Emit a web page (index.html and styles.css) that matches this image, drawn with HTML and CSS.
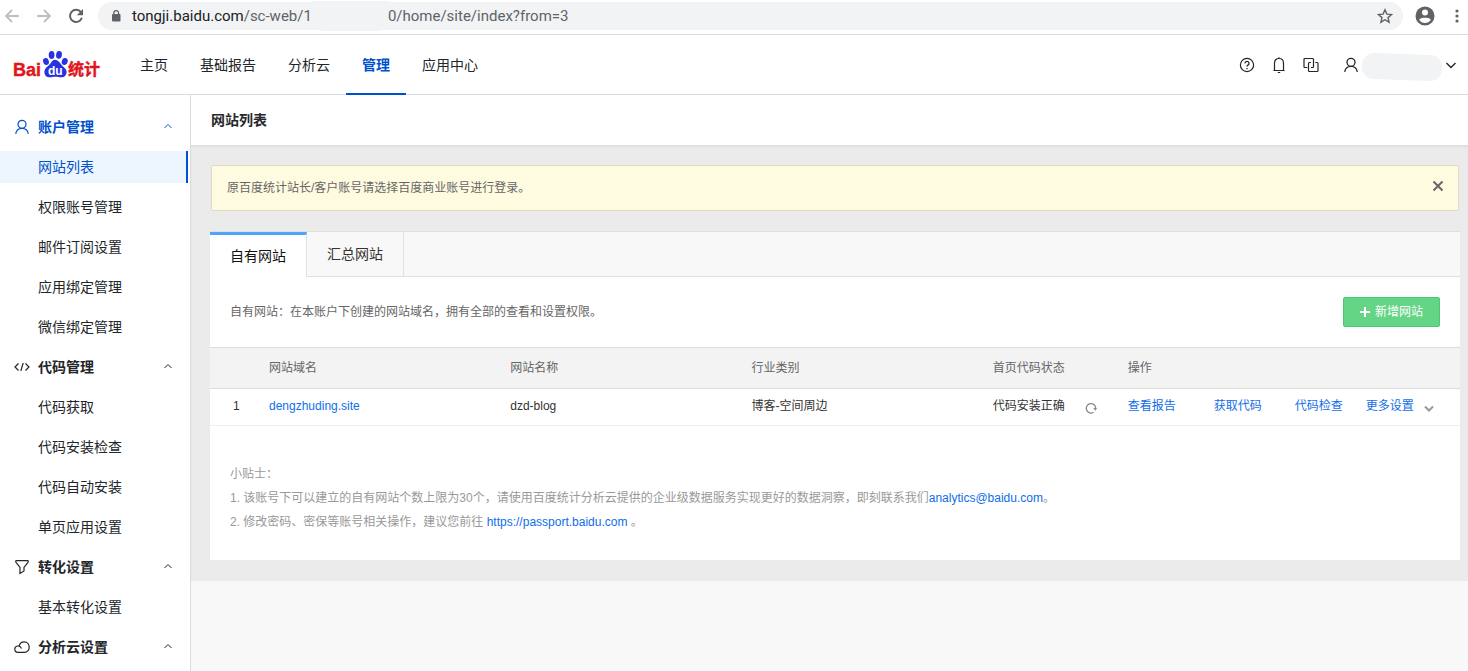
FILE: index.html
```html
<!DOCTYPE html>
<html lang="zh-CN">
<head>
<meta charset="utf-8">
<title>网站列表 - 百度统计</title>
<link rel="stylesheet" href="styles.css">
</head>
<body>
<div class="browser-bar">
  <div class="browser-nav">
    <button class="icon-button faded" aria-label="后退"><svg width="16" height="16" viewBox="0 0 16 16"><path d="M15 8H2.500M8 2L2 8L8 14" stroke-width="1.800"/></svg></button>
    <button class="icon-button faded" aria-label="前进"><svg width="16" height="16" viewBox="0 0 16 16"><path d="M1 8H13.500M8 2L14 8L8 14" stroke-width="1.800"/></svg></button>
    <button class="icon-button" aria-label="刷新"><svg width="16" height="16" viewBox="0 0 16 16"><path d="M13 4.200A6.100 6.100 0 1 0 13.900 9.800" stroke-width="2"/><path d="M15 1V7.200H8.800Z" fill="currentColor" stroke="none"/></svg></button>
  </div>
  <div class="address">
    <svg class="lock" width="10" height="12" viewBox="0 0 10 12"><rect x="1" y="4" width="8.500" height="7.500" rx="1" fill="currentColor" stroke="none"/><path d="M2.800 4.500V3a2.400 2.400 0 0 1 4.800 0V4.500" stroke-width="1.300"/></svg>
    <span class="url"><span class="url-host">tongji.baidu.com</span>/sc-web/1<span class="url-mask"></span>0/home/site/index?from=3</span>
    <button class="icon-button star" aria-label="收藏"><svg width="16" height="16" viewBox="0 0 16 16"><path d="M8 1.800L9.900 6.100L14.600 6.500L11 9.600L12.100 14.200L8 11.700L3.900 14.200L5 9.600L1.400 6.500L6.100 6.100Z" stroke-width="1.400"/></svg></button>
  </div>
  <button class="icon-button profile" aria-label="个人资料"><svg width="20" height="20" viewBox="0 0 20 20"><circle cx="10" cy="10" r="9.500" fill="currentColor" stroke="none"/><circle cx="10" cy="6.500" r="3" fill="#fff" stroke="none"/><path d="M4.200 13.700C5.600 11.200 14.400 11.200 15.800 13.700C14.400 15.900 12.300 17 10 17S5.600 15.900 4.200 13.700Z" fill="#fff" stroke="none"/></svg></button>
  <button class="icon-button more" aria-label="更多"><svg width="4" height="16" viewBox="0 0 4 16"><g fill="currentColor" stroke="none"><circle cx="2" cy="3" r="1.600"/><circle cx="2" cy="8" r="1.600"/><circle cx="2" cy="13" r="1.600"/></g></svg></button>
</div>

<header class="site-header">
  <a class="logo" href="#" aria-label="百度统计">
    <svg width="90" height="32" viewBox="0 0 90 32">
      <g class="logo-red"><text class="logo-bai" x="0" y="26">Bai</text><text class="logo-name" x="55" y="25">统计</text></g>
      <g class="logo-paw"><ellipse cx="33" cy="11.500" rx="2.900" ry="3.500" transform="rotate(-12 33 11.500)"/><ellipse cx="38.600" cy="5" rx="2.900" ry="3.900"/><ellipse cx="46" cy="4.800" rx="2.900" ry="3.900" transform="rotate(8 46 4.800)"/><ellipse cx="51.700" cy="11.500" rx="3" ry="3.500" transform="rotate(12 51.700 11.500)"/><path d="M42 9.800C39.300 9.800 38.500 12.300 36.800 14.300C34.800 16.500 31.400 18.500 31.400 22C31.400 25.300 33.500 27.300 36.600 27.300C38.800 27.300 40.200 26.800 42.400 26.800S46 27.300 48.400 27.300C51.500 27.300 53.600 25 53.600 22C53.600 18.500 50.200 17 48 14.200C46.200 12.200 44.800 9.800 42 9.800Z"/></g>
      <text class="logo-du" x="35" y="25">du</text>
    </svg>
  </a>
  <nav class="main-nav">
    <a href="#">主页</a><a href="#">基础报告</a><a href="#">分析云</a><a class="current" href="#">管理</a><a href="#">应用中心</a>
  </nav>
  <div class="header-tools">
    <button class="icon-button" aria-label="帮助"><svg width="16" height="16" viewBox="0 0 16 16"><circle cx="8" cy="8" r="6.600" stroke-width="1.200"/><path d="M6 6.400A2 2 0 1 1 8.900 8.100C8.200 8.500 8 8.800 8 9.600M8 10.900V12.200" stroke-width="1.300"/></svg></button>
    <button class="icon-button" aria-label="通知"><svg width="16" height="16" viewBox="0 0 16 16"><path d="M2.500 13.500H13.500M3.500 13.500V6.200C3.500 3.200 5.300 1.500 8 1.500S12.500 3.200 12.500 6.200V13.500M8 .3V1.500M6.800 15.500H9.200" stroke-width="1.200"/></svg></button>
    <button class="icon-button" aria-label="切换产品"><svg width="16" height="16" viewBox="0 0 16 16"><path d="M4.300 10.500H1.900Q1 10.500 1 9.600V2.400Q1 1.500 1.900 1.500H9.600Q10.500 1.500 10.500 2.400V9.600Q10.500 10.500 9.600 10.500H8M12.300 5.500H14.100Q15 5.500 15 6.400V13.600Q15 14.500 14.100 14.500H6.400Q5.500 14.500 5.500 13.600V6.400Q5.500 5.500 6.400 5.500H8" stroke-width="1.200"/></svg></button>
    <button class="icon-button account" aria-label="账户"><svg width="16" height="16" viewBox="0 0 16 16"><circle cx="8" cy="5.300" r="4" stroke-width="1.300"/><path d="M1.700 14.800C2.200 11.500 4.500 9.300 8 9.300S13.800 11.500 14.300 14.800" stroke-width="1.300"/></svg><span class="account-mask"></span><svg width="12" height="12" viewBox="0 0 12 12"><path d="M1.500 4L6 8.500L10.500 4" stroke-width="1.400"/></svg></button>
  </div>
</header>

<div class="layout">
  <aside class="sidebar">
    <section class="group active">
      <button class="group-title"><svg width="16" height="16" viewBox="0 0 16 16"><circle cx="8" cy="5.300" r="4" stroke-width="1.200"/><path d="M1.700 14.800C2.200 11.500 4.500 9.300 8 9.300S13.800 11.500 14.300 14.800" stroke-width="1.200"/></svg><span>账户管理</span><svg class="caret" width="10" height="10" viewBox="0 0 10 10"><path d="M1.500 6L5 2.500L8.500 6"/></svg></button>
      <a class="selected" href="#">网站列表</a><a href="#">权限账号管理</a><a href="#">邮件订阅设置</a><a href="#">应用绑定管理</a><a href="#">微信绑定管理</a>
    </section>
    <section class="group">
      <button class="group-title"><svg width="16" height="16" viewBox="0 0 16 16"><path d="M4.500 4.500L1 8L4.500 11.500M11.500 4.500L15 8L11.500 11.500M9.200 4L6.800 12" stroke-width="1.200"/></svg><span>代码管理</span><svg class="caret" width="10" height="10" viewBox="0 0 10 10"><path d="M1.500 6L5 2.500L8.500 6"/></svg></button>
      <a href="#">代码获取</a><a href="#">代码安装检查</a><a href="#">代码自动安装</a><a href="#">单页应用设置</a>
    </section>
    <section class="group">
      <button class="group-title"><svg width="16" height="16" viewBox="0 0 16 16"><path d="M2 1.700H14Q14.600 2.500 14 3.400L10 8.500V12L6 14.500V8.500L2 3.400Q1.400 2.500 2 1.700Z" stroke-width="1.200"/></svg><span>转化设置</span><svg class="caret" width="10" height="10" viewBox="0 0 10 10"><path d="M1.500 6L5 2.500L8.500 6"/></svg></button>
      <a href="#">基本转化设置</a>
    </section>
    <section class="group">
      <button class="group-title"><svg width="16" height="16" viewBox="0 0 16 16"><path d="M7.500 9.500C6.500 7.600 5 6.700 3.500 7C1.800 7.300.8 8.600.8 10C.8 11.800 2.100 13.300 4 13.300H10.300C13.200 13.300 15.200 11.100 15.200 8.400C15.200 5.300 13.100 2.900 10.200 2.900C7.800 2.900 6 4.300 5.300 6.600" stroke-width="1.200"/></svg><span>分析云设置</span><svg class="caret" width="10" height="10" viewBox="0 0 10 10"><path d="M1.500 6L5 2.500L8.500 6"/></svg></button>
    </section>
  </aside>

  <main class="main">
    <h1 class="page-title">网站列表</h1>
    <div class="content">
      <div class="notice"><span>原百度统计站长/客户账号请选择百度商业账号进行登录。</span><button class="icon-button" aria-label="关闭"><svg width="12" height="12" viewBox="0 0 12 12"><path d="M1.500 1.500L10.500 10.500M10.500 1.500L1.500 10.500" stroke-width="2"/></svg></button></div>
      <div class="panel">
        <div class="tabs" role="tablist"><button class="tab on" role="tab" aria-selected="true">自有网站</button><button class="tab" role="tab" aria-selected="false">汇总网站</button></div>
        <div class="intro">
          <p>自有网站：在本账户下创建的网站域名，拥有全部的查看和设置权限。</p>
          <button class="add-button"><svg width="10" height="10" viewBox="0 0 10 10"><path d="M5 0V10M0 5H10" stroke-width="2"/></svg>新增网站</button>
        </div>
        <table class="sites">
          <colgroup><col class="col-index"><col class="col-site"><col class="col-site"><col class="col-site"><col class="col-status"><col></colgroup>
          <thead><tr><th></th><th>网站域名</th><th>网站名称</th><th>行业类别</th><th>首页代码状态</th><th>操作</th></tr></thead>
          <tbody><tr>
            <td>1</td><td><a href="#">dengzhuding.site</a></td><td>dzd-blog</td><td>博客-空间周边</td>
            <td><div class="status">代码安装正确<button class="icon-button" aria-label="重新检查"><svg width="12" height="12" viewBox="0 0 12 12"><path d="M8.500 10.300A4.700 4.700 0 1 1 10.700 6.500" stroke-width="1.300"/><path d="M8.200 6H12L10.500 8.800Z" fill="currentColor" stroke="none"/></svg></button></div></td>
            <td><div class="actions"><a href="#">查看报告</a><a href="#">获取代码</a><a href="#">代码检查</a><a href="#">更多设置</a><svg width="10" height="10" viewBox="0 0 10 10"><path d="M1 3.500L5 7.500L9 3.500" stroke-width="2"/></svg></div></td>
          </tr></tbody>
        </table>
        <div class="tips">
          <p>小贴士：</p>
          <p>1. 该账号下可以建立的自有网站个数上限为30个，请使用百度统计分析云提供的企业级数据服务实现更好的数据洞察，即刻联系我们<a href="#">analytics@baidu.com</a>。</p>
          <p>2. 修改密码、密保等账号相关操作，建议您前往 <a href="#">https://passport.baidu.com</a> 。</p>
        </div>
      </div>
    </div>
  </main>
</div>
</body>
</html>
```
FILE: styles.css
```css
* { box-sizing: border-box; }
body {
  margin: 0;
  min-height: 100vh;
  display: flex;
  flex-direction: column;
  background: #f8f8f8;
  color: #222529;
  font: 12px/24px "Liberation Sans", "Noto Sans CJK SC", sans-serif;
}
p, h1 { margin: 0; }
a { color: #106ee8; text-decoration: none; }
button { font: inherit; color: inherit; cursor: pointer; }
svg { display: block; flex: none; fill: none; stroke: currentColor; }
.icon-button { display: flex; align-items: center; padding: 0; border: 0; background: none; }

/* Browser toolbar */
.browser-bar {
  display: flex;
  align-items: center;
  height: 35px;
  padding: 0 9px 3px 4px;
  background: #fff;
  border-bottom: 1px solid #d9dcde;
  color: #5f6368;
}
.browser-nav { display: flex; gap: 16px; }
.faded { color: #bdbfc1; }
.address {
  flex: 1;
  display: flex;
  align-items: center;
  height: 28px;
  margin-left: 14px;
  padding: 0 10px 0 13px;
  border-radius: 14px;
  background: #f1f3f4;
}
.url { display: flex; align-items: center; margin-left: 11px; font: 15px/24px Roboto, sans-serif; }
.url-host { color: #202124; }
.url-mask { width: 76px; height: 30px; border-radius: 0 0 12px 12px; background: #f2f3f5; }
.star { margin-left: auto; }
.profile { margin-left: 12px; }
.more { margin-left: 20px; }

/* Site header */
.site-header {
  display: flex;
  height: 60px;
  padding: 0 11px 0 13px;
  background: #fff;
  border-bottom: 1px solid #d9dddf;
}
.logo { padding-top: 15px; }
.logo-red { fill: #e1151b; stroke: #e1151b; stroke-width: 0.4px; }
.logo-paw { fill: #2932e1; stroke: none; }
.logo-bai { font: bold 18px "Liberation Sans", sans-serif; }
.logo-name { font: bold 16px "Noto Sans CJK SC", sans-serif; }
.logo-du { font: bold 12px "Liberation Sans", sans-serif; fill: #fff; stroke: none; }
.main-nav { display: flex; margin-left: 21px; }
.main-nav a { height: 61px; padding: 0 16px; font-size: 14px; line-height: 60px; color: #222529; }
.main-nav .current { color: #0052cc; font-weight: bold; border-bottom: 3px solid #0052cc; }
.header-tools { display: flex; align-items: center; gap: 16px; margin-left: auto; }
.account { margin-left: 8px; }
.account-mask { width: 80px; height: 26px; margin: 4px 3px 0; border-radius: 12px; background: #f2f3f4; transform: rotate(2deg); }

/* Layout */
.layout { flex: 1; display: flex; }
.sidebar { width: 191px; padding-top: 12px; background: #fff; border-right: 1px solid #dcdcdc; font-size: 14px; }
.group-title {
  display: flex;
  align-items: center;
  gap: 8px;
  width: 100%;
  height: 40px;
  padding: 0 17px 0 14px;
  border: 0;
  background: none;
  font-weight: bold;
}
.group.active .group-title { color: #0052cc; }
.caret { margin-left: auto; }
.group a { display: block; margin: 4px 2px 8px 0; padding-left: 38px; line-height: 32px; color: #222529; }
.group a:last-child { margin-bottom: 4px; }
.group .selected { background: #edf5ff; border-right: 2px solid #0052cc; color: #0052cc; }
.main { flex: 1; min-width: 0; }
.page-title { padding: 0 20px; background: #fff; font-size: 14px; line-height: 50px; color: #26282b; }
.content { padding: 20px 8px 21px 19px; background: #ebebeb; box-shadow: inset 0 2px 2px #dfdfdf; }

/* Notice */
.notice {
  display: flex;
  align-items: flex-start;
  justify-content: space-between;
  margin: 0 1px;
  padding: 10px 14px 10px 15px;
  border: 1px solid #dfdbc0;
  border-radius: 2px;
  background: #fffbe0;
  color: #666;
}
.notice .icon-button { height: 20px; }

/* Panel */
.panel { margin-top: 20px; background: #fff; }
.tabs { display: flex; height: 46px; border-top: 1px solid #e0e0e0; border-bottom: 1px solid #e0e0e0; background: #f8f8f8; }
.tab { padding: 0 20px; border: 0; border-right: 1px solid #e0e0e0; background: none; font-size: 14px; color: #333; }
.tab.on { height: 45px; background: #fff; border-top: 3px solid #4da3ff; color: #111; }
.intro { display: flex; align-items: center; justify-content: space-between; height: 70px; padding: 0 20px; color: #666; }
.add-button {
  display: flex;
  align-items: center;
  gap: 5px;
  height: 30px;
  padding: 0 16px;
  border: 1px solid #4cc76f;
  border-radius: 2px;
  background: #64d485;
  color: #fff;
}
.sites { width: 100%; table-layout: fixed; border-collapse: collapse; }
.col-index { width: 39px; }
.col-site { width: 19.3%; }
.col-status { width: 135px; }
.sites th, .sites td { padding: 0 0 0 20px; text-align: left; color: #333; }
.sites th { height: 41px; border-top: 1px solid #ddd; border-bottom: 1px solid #ddd; background: #f3f3f3; font-weight: normal; color: #666; }
.sites td { height: 37px; padding-bottom: 2px; border-bottom: 1px solid #eee; }
.sites td:first-child { padding-left: 23px; }
.status { display: flex; align-items: center; gap: 20px; }
.status .icon-button { padding-top: 3px; color: #888; }
.actions { display: grid; grid-template-columns: 86px 81px 71px 58px 10px; align-items: center; color: #999; }
.actions svg { margin-top: 3px; }
.tips { padding: 36px 20px 26px; color: #999; }
```
